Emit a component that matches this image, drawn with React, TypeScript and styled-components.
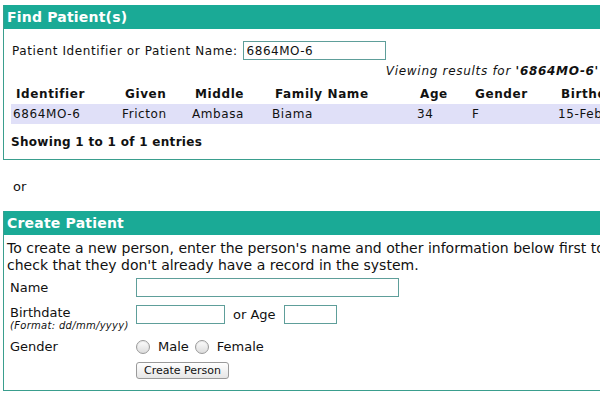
import React from 'react';
import styled, { createGlobalStyle } from 'styled-components';

const GlobalStyle = createGlobalStyle`
  html, body {
    margin: 0;
    padding: 0;
    overflow: hidden;
    background: #fff;
  }
  body {
    font-family: "DejaVu Sans", Verdana, sans-serif;
    color: #111;
  }
`;

const teal = '#1aaa96';

const Page = styled.div`
  width: 720px;
  padding: 5px 0 0 3px;
`;

const Box = styled.section`
  border: 1px solid #3a9e8e;
  border-top: none;
`;

const BoxHeader = styled.h2`
  margin: 0;
  height: 24px;
  line-height: 24px;
  background: ${teal};
  color: #fff;
  font-size: 14px;
  font-weight: bold;
  letter-spacing: 0.2px;
  padding-left: 3px;
`;

const FindBody = styled.div`
  font-size: 12px;
  letter-spacing: 0.6px;
`;

const SearchRow = styled.div`
  display: flex;
  align-items: center;
  gap: 5px;
  padding: 12px 0 0 8px;
`;

const TextInput = styled.input<{ $w: number }>`
  box-sizing: border-box;
  width: ${(p) => p.$w}px;
  height: 19px;
  margin: 0;
  border: 1px solid #5e9e9a;
  padding: 0 3px;
  font-family: inherit;
  font-size: 12px;
  letter-spacing: 0.5px;
  color: #111;
  outline: none;
`;

const Viewing = styled.div`
  width: 595px;
  text-align: right;
  font-style: italic;
  letter-spacing: 0.7px;
  margin-top: 4px;
  b {
    font-weight: bold;
  }
`;

const Results = styled.table`
  border-collapse: collapse;
  table-layout: fixed;
  margin: 6px 0 0 7px;

  th {
    text-align: left;
    font-weight: bold;
    padding: 0 0 1px 5px;
    height: 19px;
    white-space: nowrap;
    overflow: hidden;
  }
  td {
    padding: 0 0 0 2px;
    height: 20px;
    white-space: nowrap;
    overflow: hidden;
    background: #e0e0f8;
  }
`;

const Showing = styled.div`
  font-weight: bold;
  letter-spacing: 0.3px;
  padding: 11px 0 10px 7px;
`;

const Or = styled.p`
  margin: 0;
  padding: 19px 0 17px 10px;
  font-size: 13px;
`;

const Intro = styled.p`
  margin: 0;
  padding: 5px 0 0 3px;
  font-size: 14px;
  line-height: 17px;
  white-space: nowrap;
`;

const Form = styled.div`
  display: flex;
  flex-direction: column;
  padding: 4px 0 10px 6px;
  font-size: 13px;
`;

const FormRow = styled.div<{ $gap: number }>`
  display: grid;
  grid-template-columns: 126px auto;
  align-items: start;
  margin-top: ${(p) => p.$gap}px;
`;

const Label = styled.div`
  line-height: 20px;
`;

const StackLabel = styled.div`
  line-height: 15px;
`;

const Hint = styled.div`
  font-size: 10px;
  font-style: italic;
  letter-spacing: 0.3px;
  line-height: 12px;
`;

const Field = styled.div`
  display: flex;
  align-items: center;
  gap: 8px;
  min-height: 19px;
`;

const Radio = styled.input`
  appearance: none;
  margin: 0;
  width: 14px;
  height: 14px;
  border-radius: 50%;
  border: 1px solid #9a9a9a;
  background: linear-gradient(#fdfdfd, #dcdcdc);
  box-shadow: inset 0 1px 1px rgba(0, 0, 0, 0.08);
`;

const RadioLabel = styled.label`
  display: flex;
  align-items: center;
  gap: 8px;
  margin-right: -2px;
`;

const Button = styled.button`
  height: 17px;
  padding: 0 7px;
  font-family: "DejaVu Sans", Verdana, sans-serif;
  font-size: 11px;
  color: #111;
  border: 1px solid #9a9a9a;
  border-radius: 3px;
  background: linear-gradient(#ffffff, #e6e6e6);
`;

const columns = [109, 70, 80, 145, 55, 86, 120];
const headers = ['Identifier', 'Given', 'Middle', 'Family Name', 'Age', 'Gender', 'Birthdate'];
const row = ['6864MO-6', 'Fricton', 'Ambasa', 'Biama', '34', 'F', '15-Feb-1978'];

export default function App() {
  return (
    <>
      <GlobalStyle />
      <Page>
        <Box>
          <BoxHeader>Find Patient(s)</BoxHeader>
          <FindBody>
            <SearchRow>
              <span>Patient Identifier or Patient Name:</span>
              <TextInput $w={143} defaultValue="6864MO-6" />
            </SearchRow>
            <Viewing>
              Viewing results for <b>'6864MO-6'</b>
            </Viewing>
            <Results>
              <colgroup>
                {columns.map((w, i) => (
                  <col key={i} style={{ width: w }} />
                ))}
              </colgroup>
              <thead>
                <tr>
                  {headers.map((h) => (
                    <th key={h}>{h}</th>
                  ))}
                </tr>
              </thead>
              <tbody>
                <tr>
                  {row.map((c, i) => (
                    <td key={i}>{c}</td>
                  ))}
                </tr>
              </tbody>
            </Results>
            <Showing>Showing 1 to 1 of 1 entries</Showing>
          </FindBody>
        </Box>

        <Or>or</Or>

        <Box>
          <BoxHeader>Create Patient</BoxHeader>
          <Intro>
            To create a new person, enter the person's name and other information below first to
            <br />
            check that they don't already have a record in the system.
          </Intro>
          <Form>
            <FormRow $gap={0}>
              <Label>Name</Label>
              <Field>
                <TextInput $w={263} />
              </Field>
            </FormRow>
            <FormRow $gap={7}>
              <StackLabel>
                Birthdate
                <Hint>(Format: dd/mm/yyyy)</Hint>
              </StackLabel>
              <Field>
                <TextInput $w={89} />
                <span>or Age</span>
                <TextInput $w={53} />
              </Field>
            </FormRow>
            <FormRow $gap={5}>
              <Label>Gender</Label>
              <Field>
                <RadioLabel>
                  <Radio type="radio" name="gender" /> Male
                </RadioLabel>
                <RadioLabel>
                  <Radio type="radio" name="gender" /> Female
                </RadioLabel>
              </Field>
            </FormRow>
            <FormRow $gap={4}>
              <div />
              <Field>
                <Button>Create Person</Button>
              </Field>
            </FormRow>
          </Form>
        </Box>
      </Page>
    </>
  );
}
